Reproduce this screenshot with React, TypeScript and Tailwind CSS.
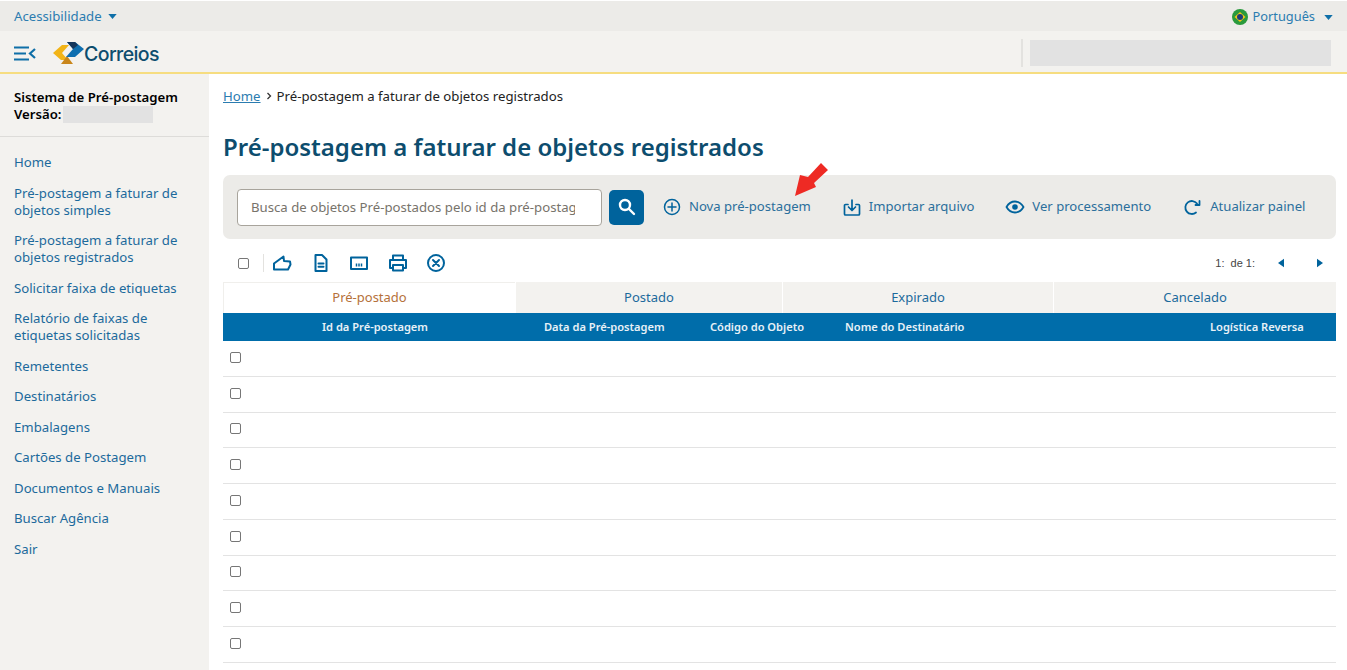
import React from 'react';

const font = { fontFamily: '"Noto Sans", sans-serif' };

const menuItems = [
  ['Home'],
  ['Pré-postagem a faturar de', 'objetos simples'],
  ['Pré-postagem a faturar de', 'objetos registrados'],
  ['Solicitar faixa de etiquetas'],
  ['Relatório de faixas de', 'etiquetas solicitadas'],
  ['Remetentes'],
  ['Destinatários'],
  ['Embalagens'],
  ['Cartões de Postagem'],
  ['Documentos e Manuais'],
  ['Buscar Agência'],
  ['Sair'],
];

const tabs = [
  { label: 'Pré-postado', width: 'w-[292px]', active: true },
  { label: 'Postado', width: 'w-[267px]' },
  { label: 'Expirado', width: 'w-[271px]' },
  { label: 'Cancelado', width: 'flex-1' },
];

const Caret = () => (
  <svg width="9" height="5" viewBox="0 0 10 6" className="fill-[#0f6fa8]">
    <path d="M0 0h10L5 6z" />
  </svg>
);

const Logo = () => (
  <div className="flex items-center">
    <svg width="31" height="24" viewBox="0 0 31 24">
      <path d="M0 12 9 4h7l-7 8 6 7H8z" fill="#f2b417" />
      <path d="M8 23l6-8 6 8z" fill="#c9861a" />
      <path d="M14 1h8l9 7-9 8h-9l7-8z" fill="#0f6fb0" />
      <path d="M14 1h8l3 3-5 4z" fill="#14365c" />
    </svg>
    <span className="mt-[4px] text-[19.5px] font-medium tracking-[-0.6px] text-[#0d4d6e] font-['Inter',sans-serif]">Correios</span>
  </div>
);

const ToolIcon = ({ children }: { children: React.ReactNode }) => (
  <svg width="20" height="20" viewBox="0 0 20 20" fill="none" stroke="#00639c" strokeWidth="2" strokeLinecap="round" strokeLinejoin="round">
    {children}
  </svg>
);

const Action = ({ icon, label, className }: { icon: React.ReactNode; label: string; className: string }) => (
  <div className={`flex items-center gap-[7px] ${className}`}>
    {icon}
    <span className="text-[13.1px] text-[#2b6f9c]">{label}</span>
  </div>
);

const Checkbox = () => (
  <span className="block h-[11px] w-[11px] rounded-[2px] border border-[#767676] bg-white" />
);

export default function App() {
  return (
    <div className="flex h-[670px] w-[1347px] flex-col overflow-hidden bg-white text-[13.2px]" style={font}>
      <div className="flex h-[31px] shrink-0 items-center justify-between border-t border-white bg-[#ecebe8] px-[14px] pt-[2px]">
        <div className="flex items-center gap-[6px] text-[13.2px] text-[#2b7cb0]">
          <span>Acessibilidade</span>
          <Caret />
        </div>
        <div className="flex items-center text-[12.8px] text-[#2b7cb0]">
          <svg width="16" height="16" viewBox="0 0 16 16" className="mr-[5px]">
            <circle cx="8" cy="8" r="8" fill="#2a9a3c" />
            <path d="M8 3l5.500 5L8 13 2.500 8z" fill="#f5c518" />
            <circle cx="8" cy="8" r="3" fill="#1d3f7a" />
          </svg>
          <span>Português</span>
          <span className="ml-[9px]"><Caret /></span>
        </div>
      </div>

      <div className="flex h-[43px] shrink-0 items-center justify-between border-b-2 border-[#f6dd80] bg-[#f3f2ef] pl-[14px] pt-[3px]">
        <div className="flex items-center gap-[17px]">
          <svg width="22" height="15" viewBox="0 0 22 15" fill="none" stroke="#0f6fa8" strokeWidth="2.2">
            <path d="M0 1.500h15M0 7.500h12M0 13.500h15M21 3l-5 4.500 5 4.500" />
          </svg>
          <Logo />
        </div>
        <div className="flex h-[28px] items-center pr-[16px]">
          <span className="mr-[7px] h-[28px] w-[2px] bg-[#e3e2df]" />
          <span className="h-[26px] w-[301px] bg-[#e2e2e2]" />
        </div>
      </div>

      <div className="flex min-h-0 flex-1">
        <aside className="w-[209px] shrink-0 bg-[#f3f2ef]">
          <div className="h-[63px] border-b border-[#dddcd9] pl-[14px] pt-[15px] text-[13.2px] font-semibold leading-[17px] text-black">
            <div>Sistema de Pré-postagem</div>
            <div className="flex items-center">
              Versão:
              <span className="ml-[1px] inline-block h-[17px] w-[90px] bg-[#e2e2e2]" />
            </div>
          </div>
          <nav className="flex flex-col gap-[13.5px] pl-[14px] pt-[17px] text-[13.2px] leading-[17px] text-[#1c6a9c]">
            {menuItems.map((lines) => (
              <div key={lines[0] + lines.length + (lines[1] || '')}>
                {lines.map((line) => (
                  <div key={line}>{line}</div>
                ))}
              </div>
            ))}
          </nav>
        </aside>

        <main className="min-w-0 flex-1 pl-[14px] pr-[11px]">
          <div className="flex items-center gap-[5px] pt-[13px] text-[13.2px] leading-[18px] text-[#222]">
            <span className="text-[#2b7cb0] underline">Home</span>
            <svg width="6" height="8" viewBox="0 0 6 8" fill="none" stroke="#333" strokeWidth="1.300"><path d="M1.500 1l3 3-3 3" /></svg>
            <span>Pré-postagem a faturar de objetos registrados</span>
          </div>

          <h1 className="mt-[25px] text-[24px] font-semibold leading-[34px] text-[#0d4d6e]">
            Pré-postagem a faturar de objetos registrados
          </h1>

          <div className="relative mt-[11px] flex h-[64px] items-center rounded-[7px] bg-[#ecebe8] pl-[14px]">
            <input
              readOnly
              placeholder="Busca de objetos Pré-postados pelo id da pré-postagem"
              className="h-[37px] w-[365px] rounded-[4px] border border-[#a8a49c] bg-white pl-[13px] pr-[26px] text-[13.2px] outline-none placeholder:text-[#77736b]"
            />
            <div className="ml-[7px] flex h-[35px] w-[35px] items-center justify-center rounded-[5px] bg-[#00639c]">
              <svg width="18" height="18" viewBox="0 0 18 18" fill="none" stroke="white" strokeWidth="2.400" strokeLinecap="round">
                <circle cx="7" cy="7" r="5" />
                <path d="M11 11l5 5" />
              </svg>
            </div>
            <Action
              className="ml-[18px]"
              label="Nova pré-postagem"
              icon={
                <ToolIcon>
                  <circle cx="10" cy="10" r="7.500" strokeWidth="1.500" />
                  <path d="M10 6v8M6 10h8" strokeWidth="1.500" />
                </ToolIcon>
              }
            />
            <Action
              className="ml-[31px]"
              label="Importar arquivo"
              icon={
                <ToolIcon>
                  <path d="M6 7.500H3.500a1 1 0 0 0-1 1V17a1 1 0 0 0 1 1h13a1 1 0 0 0 1-1V8.500a1 1 0 0 0-1-1H14M10 3v10M6.500 10l3.500 3.500 3.500-3.500" strokeWidth="1.700" />
                </ToolIcon>
              }
            />
            <Action
              className="ml-[31px]"
              label="Ver processamento"
              icon={
                <ToolIcon>
                  <path d="M1.500 10c2-3.500 5.300-5.500 8.500-5.500s6.500 2 8.500 5.500c-2 3.500-5.300 5.500-8.500 5.500S3.500 13.500 1.500 10z" strokeWidth="1.800" />
                  <circle cx="10" cy="10" r="2.800" fill="#00639c" stroke="none" />
                </ToolIcon>
              }
            />
            <Action
              className="ml-[31px] gap-[8px]"
              label="Atualizar painel"
              icon={
                <ToolIcon>
                  <path d="M14 15.500A6.500 6.500 0 1 1 15 6.500M17.500 4v4h-4" strokeWidth="1.800" />
                </ToolIcon>
              }
            />
            <svg width="55" height="45" viewBox="0 0 55 45" className="absolute left-[562px] top-[-20px]">
              <path d="M10 41 15 20l8 2L36 8l7 7-14 13 2 4z" fill="#ee2a24" />
            </svg>
          </div>

          <div className="flex h-[43px] items-center pl-[15px] pr-[13px] pt-[5px]">
            <Checkbox />
            <span className="ml-[14px] h-[18px] w-px bg-[#e3e2df]" />
            <div className="ml-[8px] flex items-center gap-[18.500px]">
              <ToolIcon>
                <path d="M2 16.500V10.500L11.500 3.500l.500 4.500 6 .500.500 3-2.500 5z" />
              </ToolIcon>
              <ToolIcon>
                <path d="M4.500 2h6.500l4.500 4.500V18h-11zM7.500 10.500h5M7.500 13.800h5" />
              </ToolIcon>
              <ToolIcon>
                <path d="M2 4.500h16v11.500H2z" />
                <path d="M7.500 10.500v3M10 10.500v3M12.500 10.500v3" strokeWidth="1.500" strokeLinecap="butt" />
              </ToolIcon>
              <ToolIcon>
                <path d="M5 7V2.500h10V7M5 15H2V7h16v8h-3M5 12h10v5.500H5z" />
              </ToolIcon>
              <ToolIcon>
                <circle cx="10" cy="10" r="8" />
                <path d="M7 7l6 6M13 7l-6 6" />
              </ToolIcon>
            </div>
            <div className="ml-auto flex items-center font-['Liberation_Sans',sans-serif] text-[11px] text-[#444]">
              <span>1:</span>
              <span className="ml-[6px]">de 1:</span>
              <svg width="6" height="10" viewBox="0 0 7 10" className="ml-[23px] fill-[#00639c]"><path d="M7 0v10L0 5z" /></svg>
              <svg width="6" height="10" viewBox="0 0 7 10" className="ml-[33px] fill-[#00639c]"><path d="M0 0v10l7-5z" /></svg>
            </div>
          </div>

          <div className="flex h-[31px] text-[13px]">
            {tabs.map((tab) => (
              <div
                key={tab.label}
                className={`flex items-center justify-center ${tab.width} ${
                  tab.active
                    ? 'border-t border-l border-[#f0efec] bg-white text-[#b5713a]'
                    : 'border-l border-white bg-[#f3f2ef] text-[#1c6a9c]'
                }`}
              >
                {tab.label}
              </div>
            ))}
          </div>

          <div className="flex h-[28px] items-center whitespace-nowrap bg-[#006daa] text-[11.100px] font-semibold text-[#e8f1f7]">
            <div className="w-[304px] text-center">Id da Pré-postagem</div>
            <div className="ml-[17px] w-[121px]">Data da Pré-postagem</div>
            <div className="ml-[45px] w-[96px]">Código do Objeto</div>
            <div className="ml-[39px] w-[120px]">Nome do Destinatário</div>
            <div className="ml-[245px]">Logística Reversa</div>
          </div>

          {Array.from({ length: 9 }).map((_, i) => (
            <div key={i} className="flex h-[35.750px] items-center border-b border-[#e3e3e3] pb-[2px] pl-[7px]">
              <Checkbox />
            </div>
          ))}
        </main>
      </div>
    </div>
  );
}
